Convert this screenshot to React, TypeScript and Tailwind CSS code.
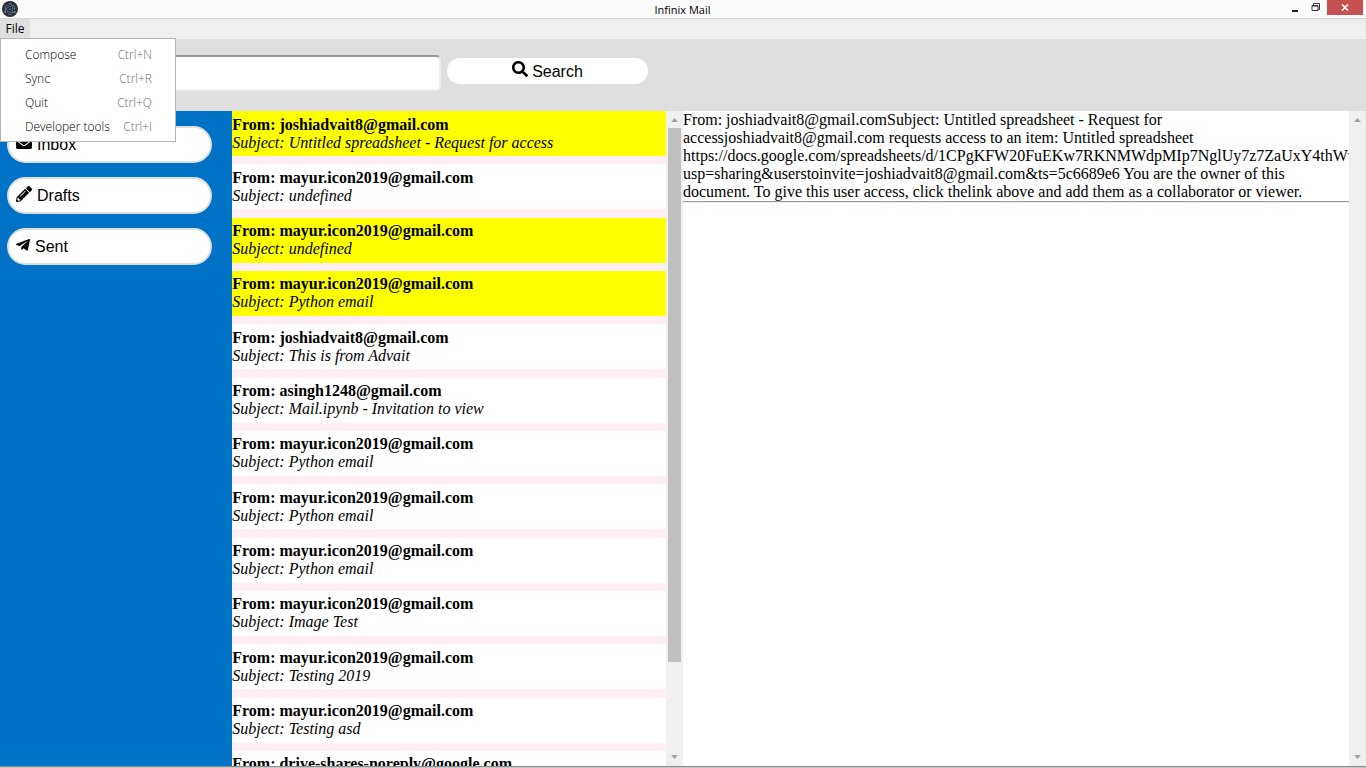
import type { ReactNode } from 'react';
import { FaEnvelope, FaPencilAlt, FaSearch, FaTelegramPlane } from 'react-icons/fa';
import { SiElectron } from 'react-icons/si';

const menuItems = [
  { label: 'Compose', keys: 'Ctrl+N' },
  { label: 'Sync', keys: 'Ctrl+R' },
  { label: 'Quit', keys: 'Ctrl+Q' },
  { label: 'Developer tools', keys: 'Ctrl+I' },
];

const mails = [
  { from: 'joshiadvait8@gmail.com', subject: 'Untitled spreadsheet - Request for access', unread: true },
  { from: 'mayur.icon2019@gmail.com', subject: 'undefined', unread: false },
  { from: 'mayur.icon2019@gmail.com', subject: 'undefined', unread: true },
  { from: 'mayur.icon2019@gmail.com', subject: 'Python email', unread: true },
  { from: 'joshiadvait8@gmail.com', subject: 'This is from Advait', unread: false },
  { from: 'asingh1248@gmail.com', subject: 'Mail.ipynb - Invitation to view', unread: false },
  { from: 'mayur.icon2019@gmail.com', subject: 'Python email', unread: false },
  { from: 'mayur.icon2019@gmail.com', subject: 'Python email', unread: false },
  { from: 'mayur.icon2019@gmail.com', subject: 'Python email', unread: false },
  { from: 'mayur.icon2019@gmail.com', subject: 'Image Test', unread: false },
  { from: 'mayur.icon2019@gmail.com', subject: 'Testing 2019', unread: false },
  { from: 'mayur.icon2019@gmail.com', subject: 'Testing asd', unread: false },
  { from: 'drive-shares-noreply@google.com', subject: '', unread: false },
];

function TitleBar() {
  return (
    <header className="flex h-[19px] shrink-0 border-b border-[#d5d5d5] bg-[#fcfcfc]">
      <div className="flex flex-1 items-center pl-0.5">
        <span className="flex size-4 items-center justify-center rounded-full bg-[#2b2e3a] text-[#9feaf9]">
          <SiElectron size={12} />
        </span>
      </div>
      <h1 className="pt-px font-['Open_Sans',sans-serif] text-[11px] leading-[18px]">Infinix Mail</h1>
      <div className="flex flex-1 items-start justify-end pr-[3px]">
        <button aria-label="Minimize" className="flex h-[15px] w-5 items-center justify-center">
          <svg width="8" height="9" viewBox="0 0 8 9"><path d="M1 7h6v2H1z" fill="#222" /></svg>
        </button>
        <button aria-label="Restore" className="flex h-[15px] w-[22px] items-center justify-center">
          <svg width="10" height="9" viewBox="0 0 10 9" fill="none" stroke="#333">
            <path d="M2.5 2V.5h6v6H7" />
            <path d="M1 2.5h6v5H1z" />
            <path d="M1 3h6" />
          </svg>
        </button>
        <button aria-label="Close" className="flex h-[15px] w-9 items-center justify-center bg-[#c75050]">
          <svg width="8" height="7" viewBox="0 0 8 7" stroke="#fff" strokeWidth="1.6"><path d="M1 .5l6 6M7 .5l-6 6" /></svg>
        </button>
      </div>
    </header>
  );
}

function MenuBar() {
  return (
    <nav className="relative h-5 shrink-0 bg-[#efefef] font-['Open_Sans',sans-serif] text-[12px]">
      <button className="block h-[19px] w-[30px] bg-[#e0e0e0]">File</button>
      <ul className="absolute top-[19px] left-0 z-10 w-44 border border-[#b4b4b4] bg-white pt-1 pb-[2px] font-light">
        {menuItems.map((item) => (
          <li key={item.label}>
            <button className="flex h-6 w-full items-center justify-between pr-[23px] pl-6 text-black">
              <span>{item.label}</span>
              <span className="text-[#6d6d6d]">{item.keys}</span>
            </button>
          </li>
        ))}
      </ul>
    </nav>
  );
}

function FolderButton({ icon, label }: { icon: ReactNode; label: string }) {
  return (
    <button className="flex h-[37px] w-full items-center gap-[5px] rounded-full border-2 border-[#dedede] bg-white pl-[7px] font-['Liberation_Sans',sans-serif] text-base text-black">
      <span className="pb-1">{icon}</span>
      {label}
    </button>
  );
}

function ScrollBar({ children }: { children?: ReactNode }) {
  return (
    <div className="flex w-[17px] shrink-0 flex-col items-center bg-[#f0f0f0]">
      <svg width="17" height="17" viewBox="0 0 17 17"><path d="M5 11l3.500-4 3.500 4z" fill="#a3a3a3" /></svg>
      <div className="w-full flex-1 px-[2px]">{children}</div>
      <svg width="17" height="17" viewBox="0 0 17 17"><path d="M5 6l3.500 4 3.500-4z" fill="#a3a3a3" /></svg>
    </div>
  );
}

export default function App() {
  return (
    <div className="flex h-screen flex-col overflow-hidden bg-white font-['Liberation_Serif',serif] text-base leading-[18px] text-black">
      <TitleBar />
      <MenuBar />
      <form className="flex h-[72px] shrink-0 items-start gap-[6px] bg-[#dfdfdf] pt-4 pl-2">
        <input
          type="text"
          aria-label="Search mail"
          className="h-9 w-[433px] rounded-[5px] border-2 border-t-[#999] border-r-[#eee] border-b-[#eee] border-l-[#999] bg-white px-2 outline-none"
        />
        <button
          type="button"
          className="mt-[3px] flex h-[26px] w-[201px] items-center justify-center gap-1 rounded-full bg-white pt-0.5 font-['Liberation_Sans',sans-serif] text-base"
        >
          <FaSearch size={16} className="mb-1.5" />
          Search
        </button>
      </form>
      <main className="flex min-h-0 flex-1">
        <aside className="flex w-[17%] shrink-0 flex-col gap-[14px] bg-[#0072c6] pt-[15px] pr-5 pl-[7px]">
          <FolderButton icon={<FaEnvelope size={16} />} label="Inbox" />
          <FolderButton icon={<FaPencilAlt size={16} />} label="Drafts" />
          <FolderButton icon={<FaTelegramPlane className="h-4 w-[14px]" />} label="Sent" />
        </aside>
        <section className="flex w-[33%] shrink-0">
          <div className="min-w-0 flex-1 overflow-hidden bg-[#ffeff4]">
            <ul className="grid h-[800px] grid-rows-15">
              {mails.map((mail, i) => (
                <li key={i}>
                  <button className={`block h-[45px] w-full text-left whitespace-nowrap ${mail.unread ? 'bg-[#ffff00]' : 'bg-white'}`}>
                    <b className="block">From: {mail.from}</b>
                    <i className="block">Subject: {mail.subject}</i>
                  </button>
                </li>
              ))}
            </ul>
          </div>
          <ScrollBar>
            <div className="h-[86%] bg-[#c0c0c0]" />
          </ScrollBar>
        </section>
        <section className="flex min-w-0 flex-1">
          <article className="min-w-0 flex-1 overflow-hidden">
            <p>
              From: joshiadvait8@gmail.comSubject: Untitled spreadsheet - Request for accessjoshiadvait8@gmail.com
              requests access to an item: Untitled spreadsheet
              https://docs.google.com/spreadsheets/d/1CPgKFW20FuEKw7RKNMWdpMIp7NglUy7z7ZaUxY4thWv/edit?usp=sharing&amp;userstoinvite=joshiadvait8@gmail.com&amp;ts=5c6689e6
              You are the owner of this document. To give this user access, click thelink above and add them as a
              collaborator or viewer.
            </p>
            <hr className="border-t border-b border-t-[#9a9a9a] border-b-[#eee]" />
          </article>
          <ScrollBar />
        </section>
      </main>
      <footer className="h-[2px] shrink-0 border-t border-[#8c8c8c] bg-[#c6c6c6]" />
    </div>
  );
}
